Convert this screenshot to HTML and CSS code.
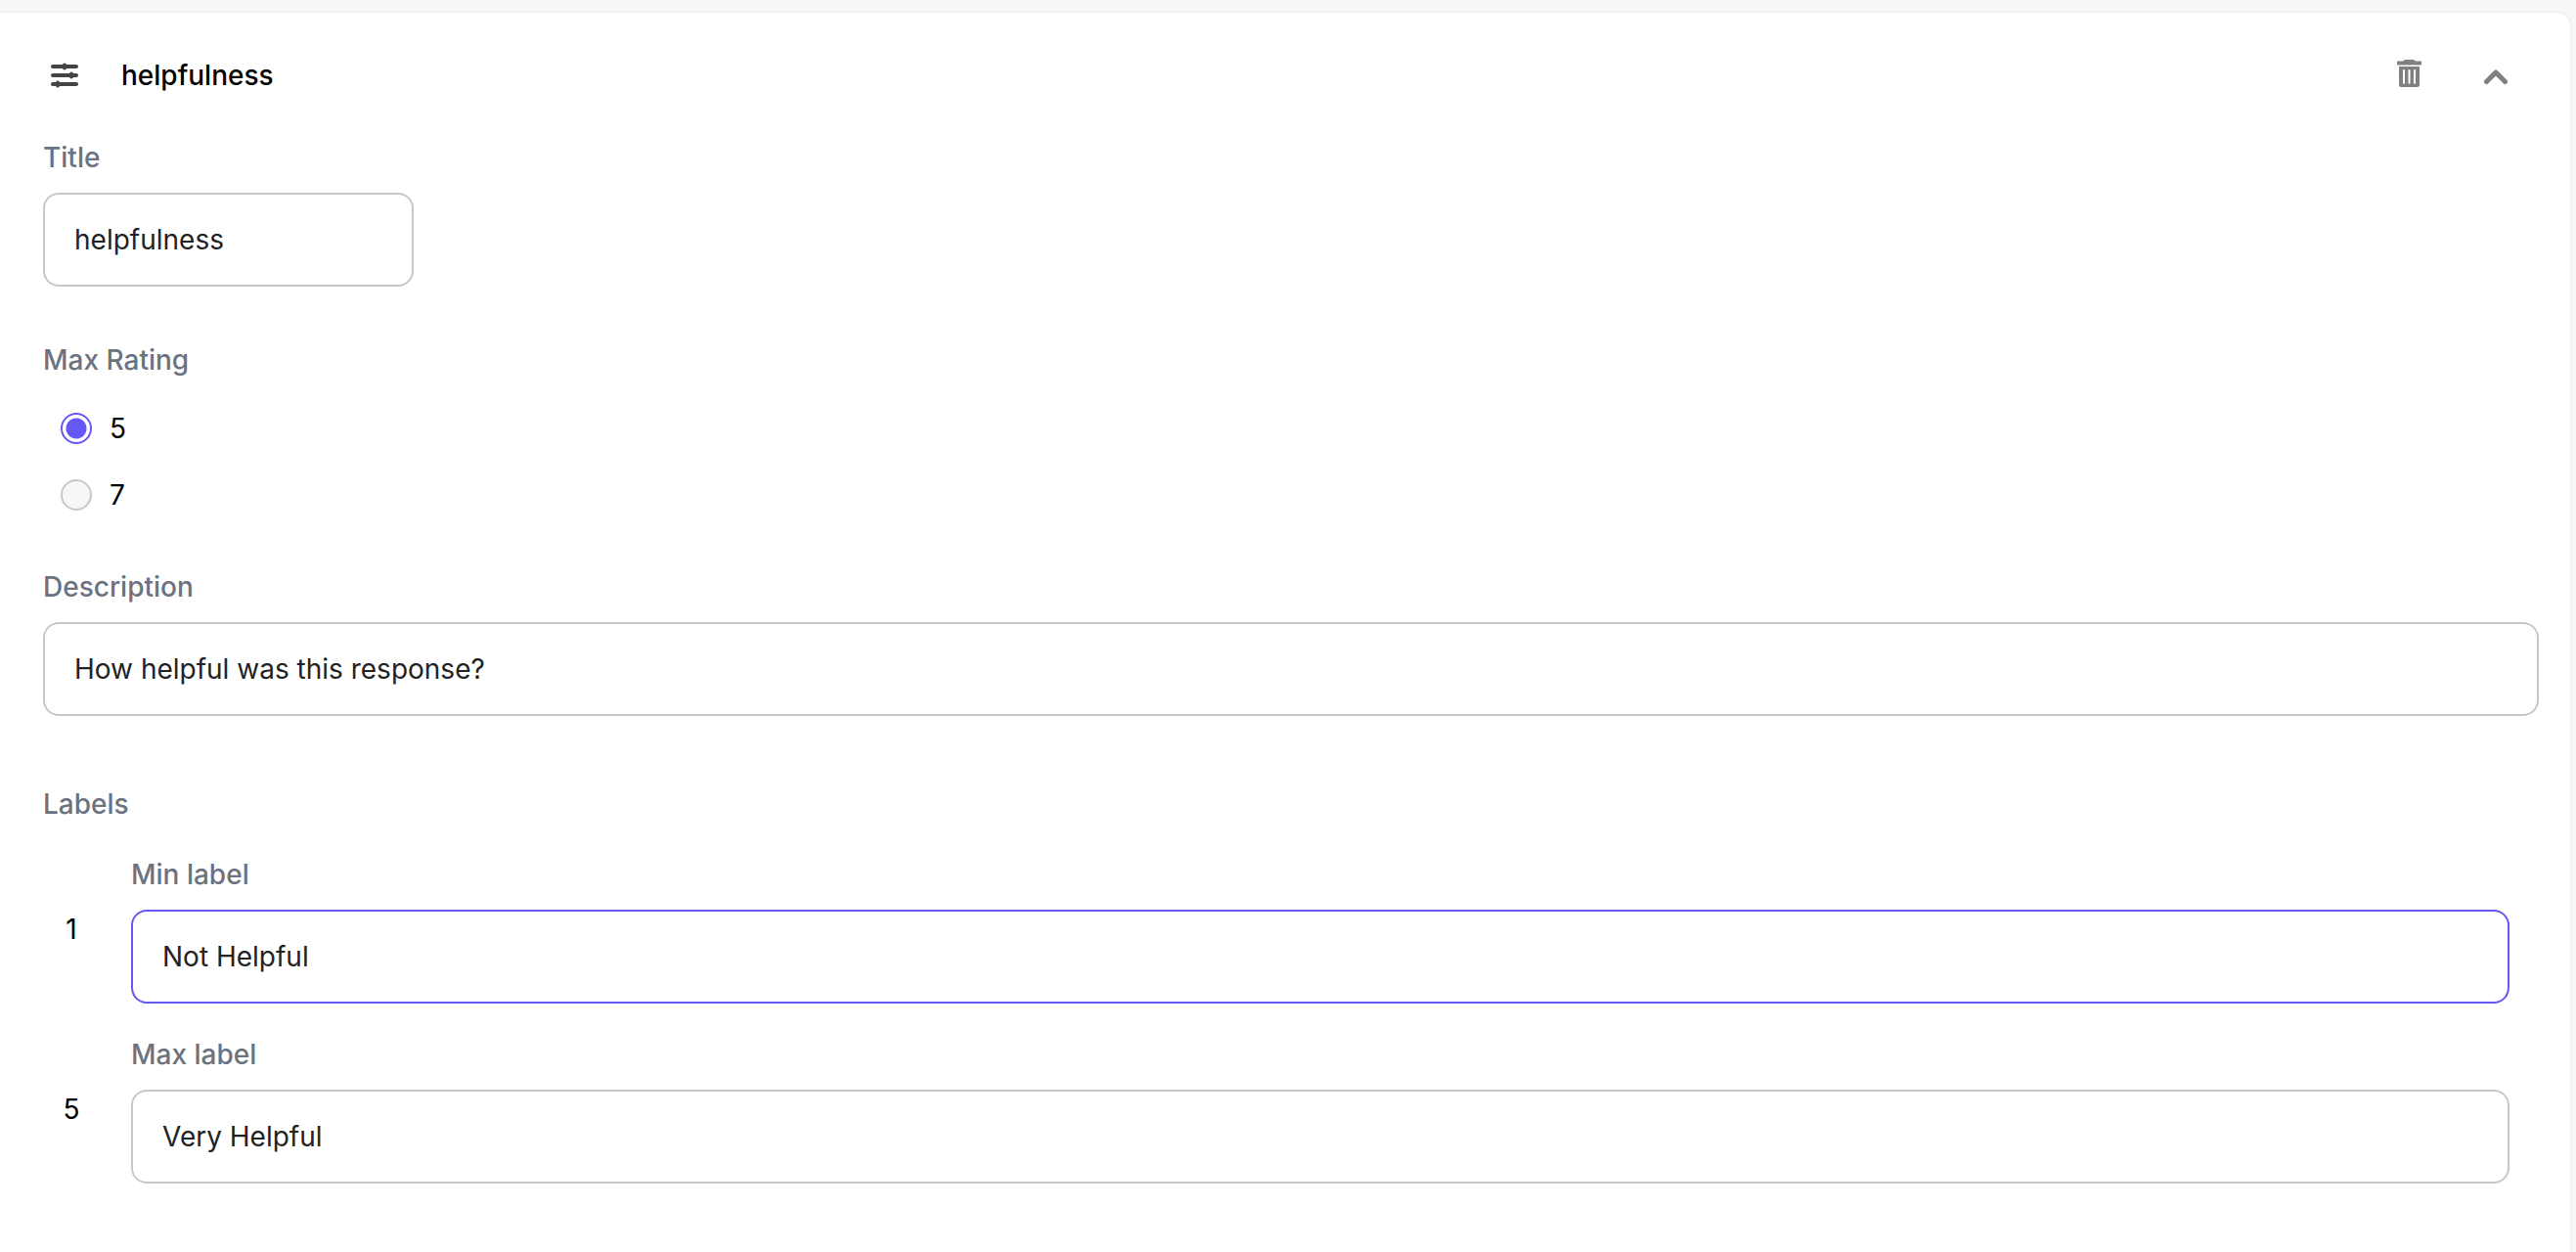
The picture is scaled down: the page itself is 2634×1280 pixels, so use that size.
FILE: index.html
```
<!DOCTYPE html>
<html lang="en">
<head>
  <meta charset="UTF-8" />
  <meta name="viewport" content="width=device-width, initial-scale=1.0"/>
  <title>Rating question</title>
  <link rel="stylesheet" href="styles.css">
</head>
<body>
  <form class="card">
    <header class="card-header">
      <svg class="type-icon" viewBox="0 0 44 44" aria-hidden="true">
        <path d="M10 13h24M10 22h24M10 31h24" stroke-width="4"/>
        <path d="M22 11.500v3M29 20.500v3M15 29.500v3" stroke-width="4"/>
      </svg>
      <h1>helpfulness</h1>
      <button class="icon-button" type="button" aria-label="Delete question">
        <svg viewBox="0 0 56 56" aria-hidden="true">
          <path d="M23 12h9l2 1.500H39q1 0 1 1v2.300q0 .8-1 .8H16q-1 0-1-.8v-2.300q0-1 1-1h5z"/>
          <path fill-rule="evenodd" d="M17 19h21v18.500q0 2.500-2.500 2.500H19.500q-2.500 0-2.500-2.500zM21 23v13q0 .8 1 .8t1-.8V23q0-.9-1-.9t-1 .9zM26.500 23v13q0 .8 1 .8t1-.8V23q0-.9-1-.9t-1 .9zM32 23v13q0 .8 1 .8t1-.8V23q0-.9-1-.9t-1 .9z"/>
        </svg>
      </button>
      <button class="icon-button" type="button" aria-label="Collapse question" aria-expanded="true">
        <svg viewBox="0 0 56 56" aria-hidden="true">
          <path class="chevron" d="M18.500 34.500L28 25l9.500 9.500"/>
        </svg>
      </button>
    </header>

    <div class="field field-title">
      <label for="title">Title</label>
      <input type="text" id="title" value="helpfulness">
    </div>

    <fieldset class="ratings">
      <legend>Max Rating</legend>
      <label class="option"><input type="radio" name="rating" value="5" checked> 5</label>
      <label class="option"><input type="radio" name="rating" value="7"> 7</label>
    </fieldset>

    <div class="field">
      <label for="description">Description</label>
      <input type="text" id="description" value="How helpful was this response?">
    </div>

    <section class="labels">
      <h2>Labels</h2>
      <div class="label-row">
        <span class="label-number">1</span>
        <div class="field">
          <label for="minLabel">Min label</label>
          <input class="active" type="text" id="minLabel" value="Not Helpful">
        </div>
      </div>
      <div class="label-row">
        <span class="label-number">5</span>
        <div class="field">
          <label for="maxLabel">Max label</label>
          <input type="text" id="maxLabel" value="Very Helpful">
        </div>
      </div>
    </section>
  </form>
</body>
</html>
```

FILE: styles.css
```
* { box-sizing: border-box; }
body { margin: 0; padding: 11px 4px 0 0; min-height: 100vh; display: flex; background: #f8f8f8; color: #000;
       font-family: Inter, "Liberation Sans", sans-serif; font-size: 28px; line-height: 40px; overflow-x: hidden; }

/* the card runs past the left and bottom edges of the window */
.card { flex: 1; margin-left: -10px; padding: 36px 32px 68px 54px; background: #fff;
        border: 2px solid #f1f1f1; border-width: 2px 2px 0 0; border-radius: 16px 16px 0 0; }

.card-header { display: flex; align-items: center; min-height: 56px; margin-bottom: 36px; padding-right: 16px; }
.card-header h1 { flex: 1; margin: 0 0 0 36px; font-size: 28px; font-weight: 500; }
.type-icon { width: 44px; height: 44px; fill: none; stroke: #444; stroke-linecap: round; }
.icon-button { width: 56px; height: 56px; margin-left: 32px; padding: 0; border: none; background: none; cursor: pointer; }
.icon-button svg { display: block; width: 56px; height: 56px; fill: #808080; }
.icon-button .chevron { fill: none; stroke: #808080; stroke-width: 5; stroke-linecap: round; stroke-linejoin: round; }

.field { display: flex; flex-direction: column; gap: 16px; }
.field label, legend, .labels h2 { color: #6b7280; font-size: 28px; font-weight: 500; }
.field input { width: 100%; height: 96px; padding: 0 30px; border: 2px solid #c8c8c8; border-radius: 16px; outline: none;
               background: #fff; color: #222; font: inherit; }
.field input:focus, .field input.active { border-color: #6558f5; }
.field-title { width: 379px; }

.ratings { margin: 55px 0 54px; padding: 0; border: none; }
legend { padding: 0; margin-bottom: 30px; }
.option { display: flex; align-items: center; gap: 18px; width: fit-content; margin-left: 18px; cursor: pointer; }
.option + .option { margin-top: 28px; }
.option input { appearance: none; width: 32px; height: 32px; margin: 0; border: 2px solid #c8c8c8; border-radius: 50%; background: #f7f7f7; }
.option input:checked { border-color: #6558f5; background: radial-gradient(circle, #6558f5 10px, #fff 11px); }

.labels { margin-top: 70px; padding-right: 30px; }
.labels h2 { margin: 0; }
.label-row { display: flex; align-items: center; gap: 32px; margin-top: 32px; }
.label-row .field { flex: 1; }
.label-number { width: 58px; text-align: center; }
```
